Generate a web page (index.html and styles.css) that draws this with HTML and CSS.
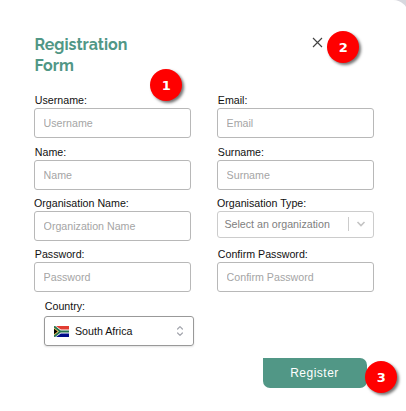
FILE: index.html
```html
<!DOCTYPE html>
<html lang="en">
<head>
<meta charset="utf-8">
<title>Registration Form</title>
<link rel="stylesheet" href="styles.css">
</head>
<body>
<main class="card">
  <header class="header">
    <h1 class="title">Registration Form</h1>
    <button class="close" type="button" aria-label="Close">
      <svg width="11" height="11" viewBox="0 0 11 11"><path d="M1 1L10 10M10 1L1 10" stroke="#444" stroke-width="1.15" fill="none"/></svg>
    </button>
  </header>
  <form class="form">
    <div class="grid">
      <label class="field"><span class="label">Username:</span><input class="input" type="text" placeholder="Username"></label>
      <label class="field"><span class="label">Email:</span><input class="input" type="text" placeholder="Email"></label>
      <label class="field"><span class="label">Name:</span><input class="input" type="text" placeholder="Name"></label>
      <label class="field"><span class="label">Surname:</span><input class="input" type="text" placeholder="Surname"></label>
      <label class="field"><span class="label label-wide">Organisation Name:</span><input class="input" type="text" placeholder="Organization Name"></label>
      <div class="field"><span class="label label-wide">Organisation Type:</span>
        <div class="select">
          <span class="select-text">Select an organization</span>
          <span class="separator"></span>
          <svg class="chevron" width="10" height="6" viewBox="0 0 10 6"><path d="M1.5 1L5 4.5L8.5 1" stroke="#c4c4c4" stroke-width="1.6" fill="none"/></svg>
        </div>
      </div>
      <label class="field"><span class="label">Password:</span><input class="input" type="text" placeholder="Password"></label>
      <label class="field"><span class="label">Confirm Password:</span><input class="input" type="text" placeholder="Confirm Password"></label>
    </div>
    <div class="field country"><span class="label">Country:</span>
      <div class="country-select">
        <svg class="flag" width="15" height="11" viewBox="0 0 15 11">
          <path fill="#fff" d="M0 0H15V11H0z"/>
          <path fill="#e23d32" d="M2 0H15V3.6H6.8z"/>
          <path fill="#000c8a" d="M2 11H15V7.4H6.8z"/>
          <path d="M0 .4L6.3 5.5L0 10.6M6.3 5.5H15" stroke="#25734f" stroke-width="2" fill="none"/>
          <path fill="#e0b13c" d="M0 1.7L4.7 5.5L0 9.3z"/>
          <path fill="#000" d="M0 2.7L3.5 5.5L0 8.3z"/>
        </svg>
        <span class="country-name">South Africa</span>
        <svg width="8" height="12" viewBox="0 0 8 12"><path d="M1.6 4L4 1.6L6.4 4M1.6 8L4 10.4L6.4 8" stroke="#a2a4ac" stroke-width="1.2" fill="none" stroke-linecap="round" stroke-linejoin="round"/></svg>
      </div>
    </div>
    <button class="register" type="button">Register</button>
  </form>
</main>
<span class="badge badge-one">1</span>
<span class="badge badge-two">2</span>
<span class="badge badge-three">3</span>
</body>
</html>
```
FILE: styles.css
```css
* { box-sizing: border-box; }
body {
  margin: 0;
  width: 406px;
  height: 411px;
  overflow: hidden;
  position: relative;
  background: #d8d8de;
  font-family: "Liberation Sans", Arial, sans-serif;
}
.card {
  width: 409px;
  height: 411px;
  padding: 34px 36px 0 34px;
  background: #fff;
  border-top-right-radius: 16px;
}
.header {
  display: flex;
  justify-content: space-between;
  height: 59px;
  padding-right: 50px;
}
.title {
  margin: 0;
  width: 120px;
  padding-left: .4px;
  font: bold 16px/21px Raleway, Lato, sans-serif;
  color: #519786;
}
.close {
  display: block;
  width: 11px;
  height: 11px;
  margin: 3px 0 0;
  padding: 0;
  border: 0;
  background: none;
}
.close svg { display: block; }
.grid {
  display: grid;
  grid-template-columns: 157px 157px;
  grid-template-rows: 52px 51px 51px 52px;
  column-gap: 26px;
}
.field {
  display: block;
  font-size: 10.67px;
  color: #111;
}
.label {
  display: block;
  height: 15px;
  padding-left: .8px;
  line-height: 14px;
}
.label-wide { padding-left: 0; }
.input, .select {
  display: flex;
  width: 157px;
  height: 30px;
  margin: 0;
  padding: 0 9px 0 8.6px;
  border: 1px solid #b8b8b8;
  border-radius: 3px;
  background: #fff;
  font: 10.67px "Liberation Sans", Arial, sans-serif;
}
.input::placeholder { color: #a5a5a5; }
.select {
  align-items: center;
  height: 27px;
  padding: 0 7px 2px 6.4px;
  border-color: #ccc;
  color: #808080;
}
.select-text { flex: 1; }
.separator { width: 1px; height: 14px; background: #ccc; }
.chevron { margin-left: 7px; }
.country {
  width: 150px;
  margin-left: 10px;
}
.country-select {
  display: flex;
  align-items: center;
  width: 150px;
  height: 30px;
  margin-top: 2px;
  padding: 0 9px;
  border: 1px solid #999;
  border-radius: 3px;
  box-shadow: 0 1px 2px rgba(0, 0, 0, .12);
}
.country-name { flex: 1; margin-left: 6px; }
.register {
  display: block;
  width: 104px;
  height: 30px;
  margin: 12px 0 0 228.5px;
  padding: 0;
  border: 0;
  border-radius: 0 7px 7px 7px;
  background: #519786;
  color: #fff;
  font: 12px "Liberation Sans", Arial, sans-serif;
  letter-spacing: .5px;
}
.badge {
  position: absolute;
  width: 32px;
  height: 32px;
  border-radius: 50%;
  background: #f00;
  box-shadow: 2px 2px 3px rgba(0, 0, 0, .55);
  color: #fff;
  font: bold 13px/33px "DejaVu Sans", sans-serif;
  text-align: center;
}
.badge-one { left: 150.4px; top: 69.4px; }
.badge-two { left: 327.4px; top: 31.4px; }
.badge-three { left: 365.4px; top: 361.4px; }
```
